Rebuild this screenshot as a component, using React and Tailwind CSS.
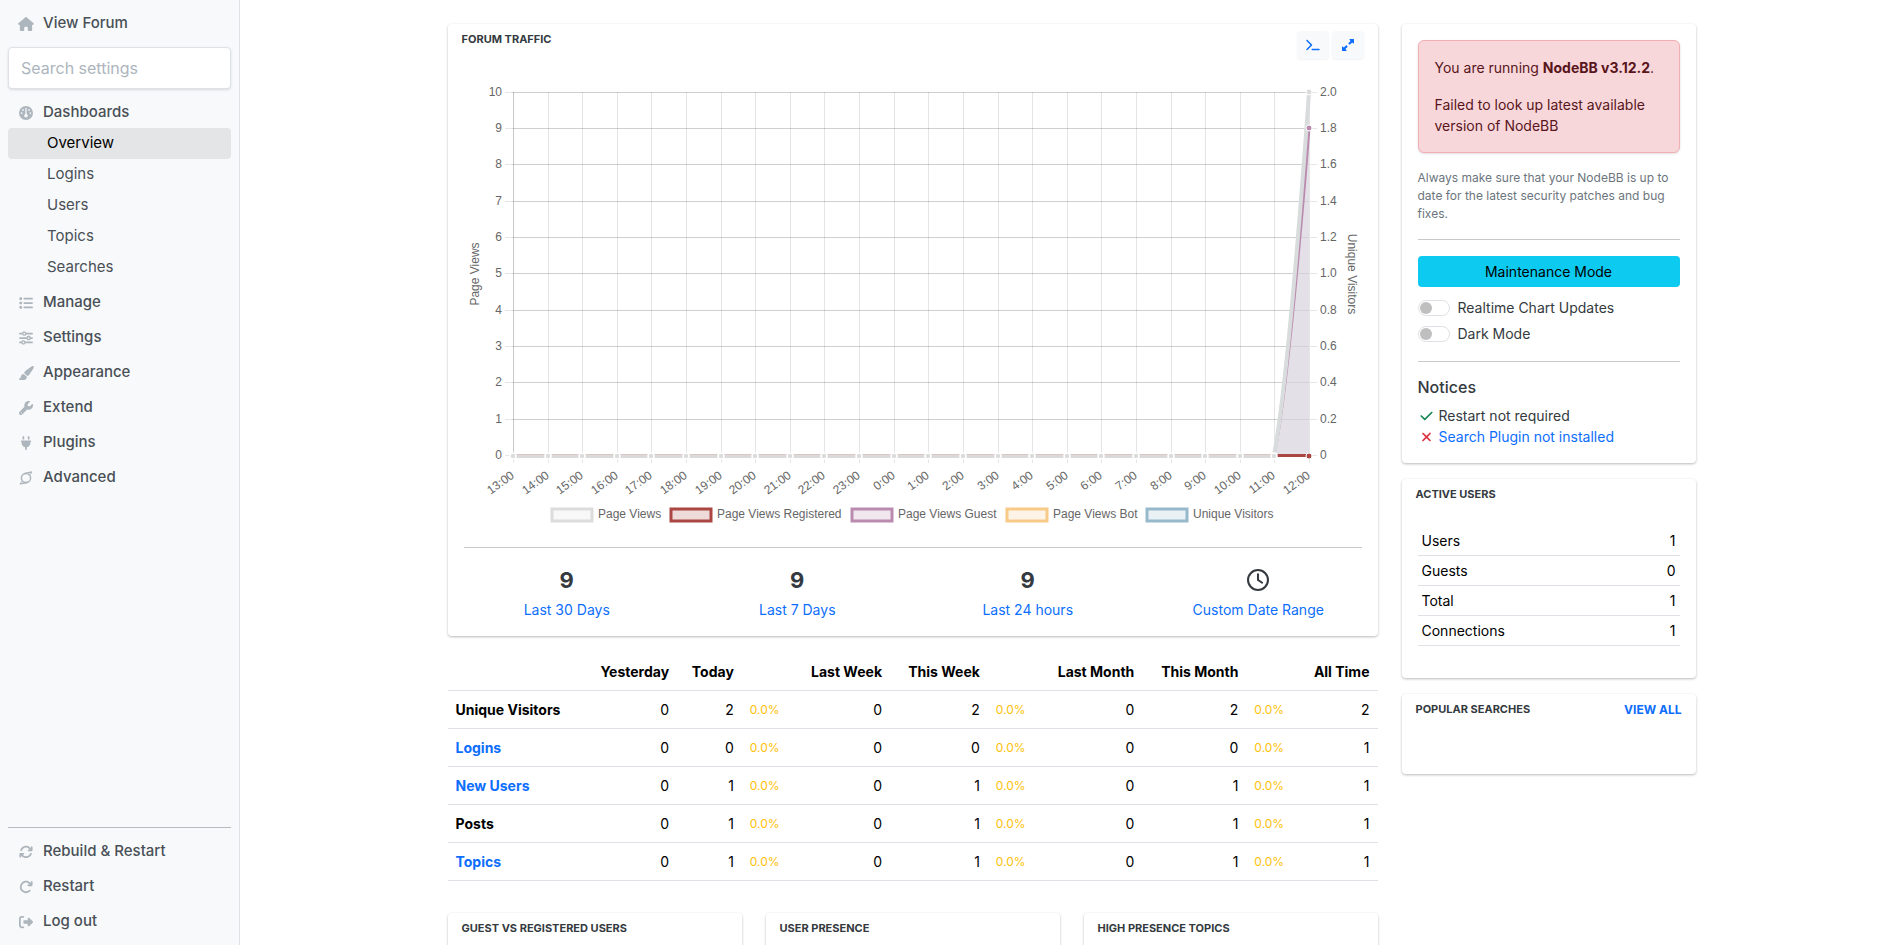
import {
    FaArrowRotateRight,
    FaArrowsRotate,
    FaCheck,
    FaGauge,
    FaHouse,
    FaList,
    FaPaintbrush,
    FaPlug,
    FaRegClock,
    FaRightFromBracket,
    FaSliders,
    FaTerminal,
    FaUpRightAndDownLeftFromCenter,
    FaWrench,
    FaXmark,
} from 'react-icons/fa6'

const dashboardPages = ['Overview', 'Logins', 'Users', 'Topics', 'Searches']

const sections = [
    { label: 'Manage', icon: FaList },
    { label: 'Settings', icon: FaSliders },
    { label: 'Appearance', icon: FaPaintbrush },
    { label: 'Extend', icon: FaWrench },
    { label: 'Plugins', icon: FaPlug },
    { label: 'Advanced', icon: AdvancedIcon },
]

const hours = [
    '13:00', '14:00', '15:00', '16:00', '17:00', '18:00', '19:00', '20:00',
    '21:00', '22:00', '23:00', '0:00', '1:00', '2:00', '3:00', '4:00',
    '5:00', '6:00', '7:00', '8:00', '9:00', '10:00', '11:00', '12:00',
]

const legend = [
    { label: 'Page Views', color: '#dcdcdc', x: 87 },
    { label: 'Page Views Registered', color: '#ab4642', x: 206 },
    { label: 'Page Views Guest', color: '#ba8baf', x: 387 },
    { label: 'Page Views Bot', color: '#f7ca88', x: 542 },
    { label: 'Unique Visitors', color: '#97b9cc', x: 682 },
]

const stats = [
    { name: 'Unique Visitors', day: 2, week: 2, month: 2, all: 2 },
    { name: 'Logins', link: true, day: 0, week: 0, month: 0, all: 1 },
    { name: 'New Users', link: true, day: 1, week: 1, month: 1, all: 1 },
    { name: 'Posts', day: 1, week: 1, month: 1, all: 1 },
    { name: 'Topics', link: true, day: 1, week: 1, month: 1, all: 1 },
]

const activeUsers = [
    ['Users', 1],
    ['Guests', 0],
    ['Total', 1],
    ['Connections', 1],
]

function AdvancedIcon({ className }) {
    return (
        <svg className={className} viewBox="0 0 14 14" fill="none" stroke="currentColor" strokeWidth="1.5">
            <circle cx="7" cy="7" r="4.6" />
            <path d="M5 2.8C7 1.6 10 1.8 13 1M9 11.2C7 12.4 4 12.2 1 13" />
            <path d="M10.4 4.2L13 1M3.6 9.8L1 13" strokeWidth="1" />
        </svg>
    )
}

function NavItem({ icon: Icon, children }) {
    return (
        <a href="#" className="flex h-[31px] items-center gap-2 rounded px-[9px] text-[15px] font-medium text-[#495057]">
            <Icon className="h-3.5 w-[18px] text-[#adb5bd]" />
            {children}
        </a>
    )
}

function Sidebar() {
    return (
        <nav className="flex w-60 flex-none flex-col justify-between border-r border-[#dee2e6] bg-[#f8f9fa] p-2">
            <div className="flex flex-col gap-2">
                <NavItem icon={FaHouse}>View Forum</NavItem>
                <input
                    type="text"
                    aria-label="Search settings"
                    placeholder="Search settings"
                    className="h-[42px] w-full rounded border border-[#dee2e6] bg-white px-3 text-base shadow-sm placeholder:text-[#adb5bd]"
                />
                <div className="flex flex-col gap-1">
                    <div>
                        <NavItem icon={FaGauge}>Dashboards</NavItem>
                        {dashboardPages.map((page) => (
                            <a
                                key={page}
                                href="#"
                                className={
                                    page === 'Overview'
                                        ? 'flex h-[31px] items-center rounded bg-[#e4e5e6] pl-[39px] text-[15px] text-black'
                                        : 'flex h-[31px] items-center rounded pl-[39px] text-[15px] text-[#495057]'
                                }
                            >
                                {page}
                            </a>
                        ))}
                    </div>
                    {sections.map(({ label, icon }) => (
                        <NavItem key={label} icon={icon}>{label}</NavItem>
                    ))}
                </div>
            </div>
            <div className="flex flex-col gap-1 border-t border-[#b8bbbe] pt-2">
                <NavItem icon={FaArrowsRotate}>Rebuild &amp; Restart</NavItem>
                <NavItem icon={FaArrowRotateRight}>Restart</NavItem>
                <NavItem icon={FaRightFromBracket}>Log out</NavItem>
            </div>
        </nav>
    )
}

function Card({ title, action, className = '', children }) {
    return (
        <section className={`rounded bg-white shadow-[0_1px_3px_rgba(33,37,41,0.2),0_1px_2px_rgba(33,37,41,0.12)] ${className}`}>
            {title && (
                <div className="flex h-[31px] items-center justify-between px-3.5">
                    <h2 className="text-[11px] font-bold text-[#343a40] uppercase">{title}</h2>
                    {action}
                </div>
            )}
            {children}
        </section>
    )
}

function TrafficChart() {
    const left = 49
    const right = 845
    const top = 8
    const bottom = 371
    const colX = (i) => Math.round(left + (i * (right - left)) / 23)
    const rowY = (i) => Math.round(top - 0.2 + (i * (bottom - top)) / 10)
    const start = colX(22)
    const curve = (y) => `M${start} ${bottom}C${start + 16} ${bottom - (bottom - y) * 0.23} ${right} ${y} ${right} ${y}`

    return (
        <svg viewBox="0 0 898 447" className="block w-full font-['Liberation_Sans',Arial,sans-serif] text-xs" fill="#666" role="img" aria-label="Forum traffic">
            <g shapeRendering="crispEdges">
                {hours.map((hour, i) => (
                    <g key={hour}>
                        <rect x={colX(i)} y={top} width="1" height={bottom - top} fill={i === 0 ? '#c8c8c8' : '#e5e5e5'} />
                        <rect x={colX(i)} y={bottom} width="1" height="8" fill="#e5e5e5" />
                    </g>
                ))}
                {Array.from({ length: 11 }, (_, i) => (
                    <g key={i}>
                        <rect x={left} y={rowY(i)} width={right - left} height="1" fill="#000" fillOpacity="0.19" />
                        <rect x={left - 8} y={rowY(i)} width="8" height="1" fill="#e5e5e5" />
                        <rect x={right} y={rowY(i)} width="8" height="1" fill="#e5e5e5" />
                    </g>
                ))}
            </g>
            {Array.from({ length: 11 }, (_, i) => (
                <g key={i}>
                    <text x={left - 11} y={rowY(i) + 4} textAnchor="end">{10 - i}</text>
                    <text x={right + 11} y={rowY(i) + 4}>{i === 10 ? '0' : (2 - i * 0.2).toFixed(1)}</text>
                </g>
            ))}
            {hours.map((hour, i) => (
                <text key={hour} textAnchor="end" transform={`translate(${colX(i) + 2} ${bottom + 22}) rotate(-36)`}>{hour}</text>
            ))}
            <text textAnchor="middle" transform="translate(15 190) rotate(-90)">Page Views</text>
            <text textAnchor="middle" transform="translate(884 190) rotate(90)">Unique Visitors</text>

            <path d={`${curve(top)}V${bottom}Z`} fill="#dcdcdc" fillOpacity="0.6" />
            <path d={`${curve(rowY(1))}V${bottom}Z`} fill="#d0c0e0" fillOpacity="0.22" />
            <rect x={start} y={bottom - 1} width={right - start} height="3" fill="#ab4642" />
            <rect x={left} y={bottom - 1} width={start - left} height="1" fill="#dcc5c3" />
            <rect x={left} y={bottom} width={start - left} height="3" fill="#d9dada" />
            <path d={curve(rowY(1))} fill="none" stroke="#ba8baf" strokeWidth="3" />
            <path d={curve(top)} fill="none" stroke="#d9dcdc" strokeWidth="4" />
            {hours.slice(0, 23).map((hour, i) => (
                <circle key={hour} cx={colX(i)} cy={bottom + 1} r="3" fill="#dcdcdc" stroke="#fff" strokeWidth="1.5" />
            ))}
            <circle cx={right} cy={bottom + 1} r="3" fill="#ab4642" stroke="#fff" />
            <circle cx={right} cy={rowY(1)} r="3" fill="#ba8baf" stroke="#fff" />
            <circle cx={right} cy={top} r="3" fill="#dcdcdc" stroke="#fff" />

            {legend.map(({ label, color, x }) => (
                <g key={label}>
                    <rect x={x + 1} y="425" width="40" height="12" fill={color} fillOpacity="0.2" stroke={color} strokeWidth="3" />
                    <text x={x + 47} y="434">{label}</text>
                </g>
            ))}
        </svg>
    )
}

function Total({ label, children }) {
    return (
        <div className="flex flex-col items-center gap-[3px]">
            <div className="flex h-8 items-center text-[22px] font-bold text-[#343a40]">{children}</div>
            <a href="#" className="text-sm leading-[21px] text-[#0d6efd]">{label}</a>
        </div>
    )
}

function ForumTraffic() {
    return (
        <Card>
            <div className="flex h-11 justify-between px-3.5">
                <h2 className="text-[11px] leading-[31px] font-bold text-[#343a40] uppercase">Forum Traffic</h2>
                <div className="flex gap-[3px] pt-[7px]">
                    <button aria-label="View as JSON" className="flex h-7 w-8 items-center justify-center rounded bg-[#f8f9fa] text-[#0d6efd] shadow-xs">
                        <FaTerminal className="h-3 w-3.5" />
                    </button>
                    <button aria-label="Expand" className="flex h-7 w-8 items-center justify-center rounded bg-[#f8f9fa] text-[#0d6efd] shadow-xs">
                        <FaUpRightAndDownLeftFromCenter className="size-3" />
                    </button>
                </div>
            </div>
            <div className="p-4">
                <TrafficChart />
                <hr className="my-4 border-[#c8c9ca]" />
                <div className="-mx-3 grid grid-cols-4">
                    <Total label="Last 30 Days">9</Total>
                    <Total label="Last 7 Days">9</Total>
                    <Total label="Last 24 hours">9</Total>
                    <Total label="Custom Date Range"><FaRegClock /></Total>
                </div>
            </div>
        </Card>
    )
}

function StatsTable() {
    return (
        <table className="mt-[17px] w-full text-right text-sm leading-[21px] text-black [&_td]:p-2 [&_th]:p-2">
            <thead>
                <tr className="border-b border-[#dee2e6]">
                    <td />
                    <th scope="col">Yesterday</th>
                    <th scope="col">Today</th>
                    <td />
                    <th scope="col">Last Week</th>
                    <th scope="col">This Week</th>
                    <td />
                    <th scope="col">Last Month</th>
                    <th scope="col">This Month</th>
                    <td />
                    <th scope="col">All Time</th>
                </tr>
            </thead>
            <tbody>
                {stats.map((row) => (
                    <tr key={row.name} className="border-b border-[#dee2e6]">
                        <th scope="row" className="text-left">
                            {row.link ? <a href="#" className="text-[#0d6efd]">{row.name}</a> : row.name}
                        </th>
                        <td>0</td>
                        <td>{row.day}</td>
                        <td className="text-left text-xs text-[#ffc107]">0.0%</td>
                        <td>0</td>
                        <td>{row.week}</td>
                        <td className="text-left text-xs text-[#ffc107]">0.0%</td>
                        <td>0</td>
                        <td>{row.month}</td>
                        <td className="text-left text-xs text-[#ffc107]">0.0%</td>
                        <td>{row.all}</td>
                    </tr>
                ))}
            </tbody>
        </table>
    )
}

function Toggle({ label }) {
    return (
        <label className="flex items-center gap-2 leading-[21px]">
            <input
                type="checkbox"
                role="switch"
                className="h-4 w-8 appearance-none rounded-full border border-[#dee2e6] bg-white p-px before:block before:size-3 before:rounded-full before:bg-[#bfbfbf] checked:before:ml-auto"
            />
            {label}
        </label>
    )
}

function VersionCard() {
    return (
        <Card className="p-4 text-sm leading-[21px] text-[#343a40]">
            <div className="rounded-md border border-[#f1aeb5] bg-[#f8d7da] p-4 text-[#58151c] shadow-sm">
                <p className="mb-4">You are running <strong>NodeBB v3.12.2</strong>.</p>
                <p>Failed to look up latest available version of NodeBB</p>
            </div>
            <p className="mt-4 text-xs leading-[18px] text-[#6c757d]">
                Always make sure that your NodeBB is up to date for the latest security patches and bug fixes.
            </p>
            <hr className="my-4 border-[#c8c9ca]" />
            <button className="h-[31px] w-full rounded bg-[#0dcaf0] text-black">Maintenance Mode</button>
            <div className="mt-2.5 flex flex-col gap-[5px] pb-px">
                <Toggle label="Realtime Chart Updates" />
                <Toggle label="Dark Mode" />
            </div>
            <hr className="my-4 border-[#c8c9ca]" />
            <h3 className="mb-2 text-base leading-[19px] font-medium">Notices</h3>
            <div className="flex items-center gap-1">
                <FaCheck className="h-3.5 w-[17px] text-[#198754]" /> Restart not required
            </div>
            <div className="flex items-center gap-1">
                <FaXmark className="h-3.5 w-[17px] text-[#dc3545]" /> <a href="#" className="text-[#0d6efd]">Search Plugin not installed</a>
            </div>
        </Card>
    )
}

export default function App() {
    return (
        <div className="flex h-screen bg-white font-[Inter,sans-serif]">
            <Sidebar />
            <main className="min-w-0 flex-1 overflow-y-auto px-9 py-6 [scrollbar-width:none]">
                <div className="mx-auto grid max-w-[1248px] grid-cols-4 items-start gap-6">
                    <div className="col-span-3">
                        <ForumTraffic />
                        <StatsTable />
                        <div className="mt-8 grid grid-cols-3 gap-6">
                            <Card title="Guest vs Registered Users" className="h-72" />
                            <Card title="User Presence" className="h-72" />
                            <Card title="High Presence Topics" className="h-72" />
                        </div>
                    </div>
                    <div className="flex flex-col gap-4">
                        <VersionCard />
                        <Card title="Active Users">
                            <div className="p-4">
                                <table className="mb-4 w-full text-sm leading-[21px] text-black">
                                    <tbody>
                                        {activeUsers.map(([label, count]) => (
                                            <tr key={label} className="border-b border-[#dee2e6]">
                                                <th scope="row" className="p-1 text-left font-normal">{label}</th>
                                                <td className="p-1 text-right">{count}</td>
                                            </tr>
                                        ))}
                                    </tbody>
                                </table>
                            </div>
                        </Card>
                        <Card
                            title="Popular Searches"
                            className="h-20"
                            action={<a href="#" className="text-xs font-bold text-[#0d6efd] uppercase">View All</a>}
                        />
                    </div>
                </div>
            </main>
        </div>
    )
}
